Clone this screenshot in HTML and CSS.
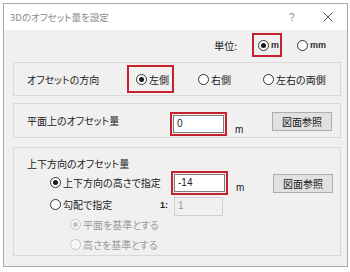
FILE: index.html
```html
<!DOCTYPE html>
<html lang="ja">
<head>
  <meta charset="UTF-8">
  <title>3Dのオフセット量を設定</title>
  <link rel="stylesheet" href="styles.css">
</head>
<body>
  <div class="dialog">
    <div class="titlebar">
      <span class="title">3Dのオフセット量を設定</span>
      <span class="help">?</span>
      <span class="close">
        <svg width="10" height="10" viewBox="0 0 10 10"><path d="M0.5 0.5 L9.5 9.5 M9.5 0.5 L0.5 9.5" stroke="#555" stroke-width="1" fill="none"/></svg>
      </span>
    </div>

    <div class="content">
      <!-- 単位 -->
      <div class="unit-row">
        <span class="unit-label">単位:</span>
        <span class="hl unit-m"><i class="radio on"></i><span class="small-latin">m</span></span>
        <span class="opt unit-mm"><i class="radio"></i><span class="small-latin">mm</span></span>
      </div>

      <!-- オフセットの方向 -->
      <div class="group dir-group">
        <span class="row-label dir-label">オフセットの方向</span>
        <span class="hl dir-left"><i class="radio on"></i>左側</span>
        <span class="opt dir-right"><i class="radio"></i>右側</span>
        <span class="opt dir-both"><i class="radio"></i>左右の両側</span>
      </div>

      <!-- 平面上のオフセット量 -->
      <div class="group plane-group">
        <span class="row-label plane-label">平面上のオフセット量</span>
        <span class="hl-input"><span class="input">0</span></span>
        <span class="unit">m</span>
        <button class="btn">図面参照</button>
      </div>

      <!-- 上下方向のオフセット量 -->
      <div class="group vert-group">
        <div class="group-title">上下方向のオフセット量</div>
        <div class="vrow vrow-height">
          <span class="opt vlabel"><i class="radio on"></i>上下方向の高さで指定</span>
          <span class="hl-input"><span class="input">-14</span></span>
          <span class="unit">m</span>
          <button class="btn">図面参照</button>
        </div>
        <div class="vrow vrow-slope">
          <span class="opt slope-label"><i class="radio"></i>勾配で指定</span>
          <span class="ratio">1:</span>
          <span class="input disabled">1</span>
        </div>
        <div class="vrow sub">
          <span class="opt off"><i class="radio on off"></i>平面を基準とする</span>
        </div>
        <div class="vrow sub">
          <span class="opt off"><i class="radio off"></i>高さを基準とする</span>
        </div>
      </div>
    </div>
  </div>
</body>
</html>
```

FILE: styles.css
```css
body {
  margin: 0;
  padding: 0;
  background: #ffffff;
  font-family: "Noto Sans CJK JP", "Noto Sans", sans-serif;
  font-size: 10px;
  font-feature-settings: "palt";
  color: #1a1a1a;
}

/* Window */
.dialog {
  box-sizing: border-box;
  width: 345px;
  height: 264px;
  margin: 3px 0 0 3px;
  border: 1px solid #a9a9a9;
  background: #f0f0f0;
}

.titlebar {
  display: flex;
  align-items: center;
  height: 26px;
  background: #ffffff;
  padding-left: 6px;
}

.title {
  flex: 1;
  color: #8a8a8a;
  font-size: 9.5px;
}

.help {
  width: 10px;
  color: #8a8a8a;
  font-family: "Liberation Sans", sans-serif;
  font-size: 10px;
  margin-right: 24px;
}

.close {
  display: flex;
  margin-right: 14px;
}

.content {
  padding: 3px 6px 0 9px;
}

/* Radio buttons */
.radio {
  position: relative;
  display: inline-block;
  box-sizing: border-box;
  width: 11px;
  height: 11px;
  border: 1px solid #333;
  border-radius: 50%;
  background: #fff;
  margin-right: 2px;
  flex: none;
}

.radio.on::after {
  content: "";
  position: absolute;
  left: 2px;
  top: 2px;
  width: 5px;
  height: 5px;
  border-radius: 50%;
  background: #1a1a1a;
}

.radio.off {
  border-color: #c4c4c4;
  background: #f7f7f7;
}

.radio.on.off::after {
  background: #c4c4c4;
}

.opt {
  display: flex;
  align-items: center;
}

.opt.off {
  color: #9a9a9a;
}

.small-latin {
  font-family: "Liberation Sans", sans-serif;
  font-size: 9px;
  font-weight: bold;
  color: #333;
}

/* Red highlight frames */
.hl {
  display: flex;
  align-items: center;
  box-sizing: border-box;
  border: 2px solid #c4222c;
}

.hl-input {
  box-sizing: border-box;
  display: flex;
  border: 2px solid #c4222c;
  padding: 1px;
  width: 57px;
  height: 24px;
}

.input {
  box-sizing: border-box;
  flex: 1;
  height: 18px;
  border: 1px solid #7a7a7a;
  background: #fff;
  padding-left: 3px;
  font-family: "Liberation Sans", sans-serif;
  font-size: 10px;
  line-height: 16px;
  color: #222;
}

.input.disabled {
  flex: none;
  width: 49px;
  height: 19px;
  border-color: #cfcfcf;
  background: #f0f0f0;
  color: #9a9a9a;
  align-self: flex-start;
  margin-top: 2px;
}

.unit {
  font-family: "Liberation Sans", sans-serif;
  font-size: 10px;
  width: 45px;
  padding-left: 8px;
  box-sizing: border-box;
  align-self: flex-end;
  margin-bottom: 2px;
}

.btn {
  box-sizing: border-box;
  width: 60px;
  height: 19px;
  margin: 0;
  padding: 0;
  border: 1px solid #adadad;
  background: #e1e1e1;
  font-family: inherit;
  font-size: 10px;
  font-feature-settings: "palt";
  color: #1a1a1a;
}

/* Unit row */
.unit-row {
  display: flex;
  justify-content: flex-end;
  align-items: center;
  height: 24px;
  padding-right: 15px;
}

.unit-label {
  margin-right: 15px;
}

.unit-m {
  width: 30px;
  height: 24px;
  padding-left: 4px;
}

.unit-mm {
  margin-left: 15px;
}

/* Group boxes */
.group {
  box-sizing: border-box;
  border: 1px solid #d9d9d9;
  margin-top: 6px;
}

.dir-group {
  display: flex;
  align-items: center;
  height: 34px;
  margin-top: 5px;
  padding-left: 13px;
}

.dir-label {
  width: 100px;
}

.dir-left {
  width: 47px;
  height: 28px;
  padding-left: 7px;
}

.dir-right {
  margin-left: 24px;
  width: 65px;
}

.plane-group {
  display: flex;
  align-items: flex-start;
  height: 35px;
  margin-top: 7px;
  padding: 8px 0 0 13px;
}

.plane-label {
  width: 143px;
  line-height: 18px;
}

.vert-group {
  height: 109px;
  margin-top: 9px;
  padding: 8px 0 0 13px;
}

.group-title {
  height: 14px;
  line-height: 15px;
}

.vrow {
  display: flex;
  align-items: center;
  padding-left: 23px;
}

.vrow-height {
  height: 25px;
}

.vrow-height .vlabel {
  width: 121px;
}

.vrow-height .btn {
  align-self: flex-start;
  margin-top: 4px;
}

.vrow-slope {
  height: 19px;
}

.slope-label {
  width: 110px;
}

.ratio {
  width: 14px;
  font-family: "Liberation Sans", sans-serif;
  font-size: 9px;
  font-weight: bold;
}

.vrow.sub {
  height: 20px;
  padding-left: 43px;
}
```
